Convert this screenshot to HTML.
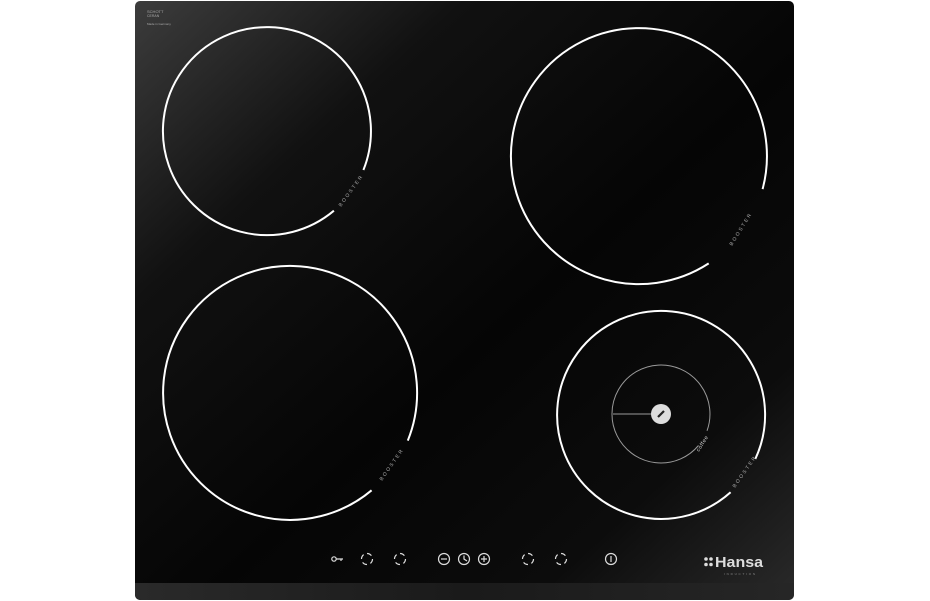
<!DOCTYPE html><html><head><style>
body{margin:0;background:#fff;width:930px;height:601px;overflow:hidden}
</style></head><body>
<svg width="930" height="601" viewBox="0 0 930 601" xmlns="http://www.w3.org/2000/svg" style="display:block">
<defs>
<linearGradient id="g" x1="0" y1="0" x2="1" y2="1">
<stop offset="0" stop-color="#3c3c3c"/><stop offset="0.25" stop-color="#111"/><stop offset="0.55" stop-color="#050505"/><stop offset="0.8" stop-color="#0c0c0c"/><stop offset="1" stop-color="#2a2a2a"/>
</linearGradient>
<linearGradient id="s" x1="0" y1="0" x2="1" y2="0">
<stop offset="0" stop-color="#2a2a2a"/><stop offset="0.5" stop-color="#1a1a1a"/><stop offset="1" stop-color="#262626"/>
</linearGradient>
</defs>
<rect x="135" y="1" width="659" height="599" rx="5" fill="url(#g)"/>
<path d="M135,583 H794 V594 a6,6 0 0 1 -6,6 H141 a6,6 0 0 1 -6,-6 Z" fill="url(#s)"/>
<g fill="none" stroke="#fff" stroke-width="2">
<path d="M333.9,210.7 A104,104 0 1 1 363.4,170"/>
<path d="M708.7,263.4 A128,128 0 1 1 762.6,189.1"/>
<path d="M371.6,490.3 A127,127 0 1 1 407.8,440.6"/>
<path d="M730.6,492.3 A104,104 0 1 1 755.3,459"/>
</g>
<g fill="none" stroke="#9a9a9a" stroke-width="1">
<path d="M698.5,445.5 A49,49 0 1 1 707,430.8"/>
<line x1="613" y1="414" x2="652" y2="414"/>
</g>
<circle cx="661" cy="414" r="10" fill="#ddd"/>
<line x1="658" y1="417" x2="664" y2="411" stroke="#222" stroke-width="2.2"/>
<g font-family="Liberation Sans, sans-serif" font-size="5" fill="#aaa" letter-spacing="2">
<text transform="translate(341,207) rotate(-54)">BOOSTER</text>
<text transform="translate(732,246) rotate(-58)">BOOSTER</text>
<text transform="translate(382,481) rotate(-55)">BOOSTER</text>
<text transform="translate(735,488) rotate(-55)">BOOSTER</text>
<text transform="translate(699,452) rotate(-58)" letter-spacing="0.5" font-size="5.5" fill="#ccc">coffee</text>
</g>
<g font-family="Liberation Sans, sans-serif" fill="#aaa">
<text x="147" y="13" font-size="4">SCHOTT</text>
<text x="147" y="17" font-size="3.5">CERAN</text>
<text x="147" y="25" font-size="3">Made in Germany</text>
</g>
<g fill="none" stroke="#ddd" stroke-width="1.2">
<circle cx="334" cy="559" r="2.2"/><path d="M336,559 H343 M341,559 v2"/>
<circle cx="367" cy="559" r="5.5" stroke-dasharray="5 3.6"/>
<circle cx="400" cy="559" r="5.5" stroke-dasharray="5 3.6"/>
<circle cx="444" cy="559" r="5.5"/><path d="M441,559 H447"/>
<circle cx="464" cy="559" r="5.5"/><path d="M464,555.5 V559 L467,561"/>
<circle cx="484" cy="559" r="5.5"/><path d="M481,559 H487 M484,556 V562"/>
<circle cx="528" cy="559" r="5.5" stroke-dasharray="5 3.6"/>
<circle cx="561" cy="559" r="5.5" stroke-dasharray="5 3.6"/>
<circle cx="611" cy="559" r="5.5"/><path d="M611,556 V562"/>
</g>
<g fill="#ddd">
<circle cx="706" cy="559" r="1.8"/><circle cx="706" cy="564.5" r="1.8"/><circle cx="711" cy="559" r="1.8"/><circle cx="711" cy="564.5" r="1.8"/>
<text x="715" y="567" font-family="Liberation Sans, sans-serif" font-weight="bold" font-size="15" textLength="48" lengthAdjust="spacingAndGlyphs">Hansa</text>
<text x="724" y="575" font-family="Liberation Sans, sans-serif" font-size="3" fill="#888" letter-spacing="1.8">INDUCTION</text>
</g>
</svg>
</body></html>
